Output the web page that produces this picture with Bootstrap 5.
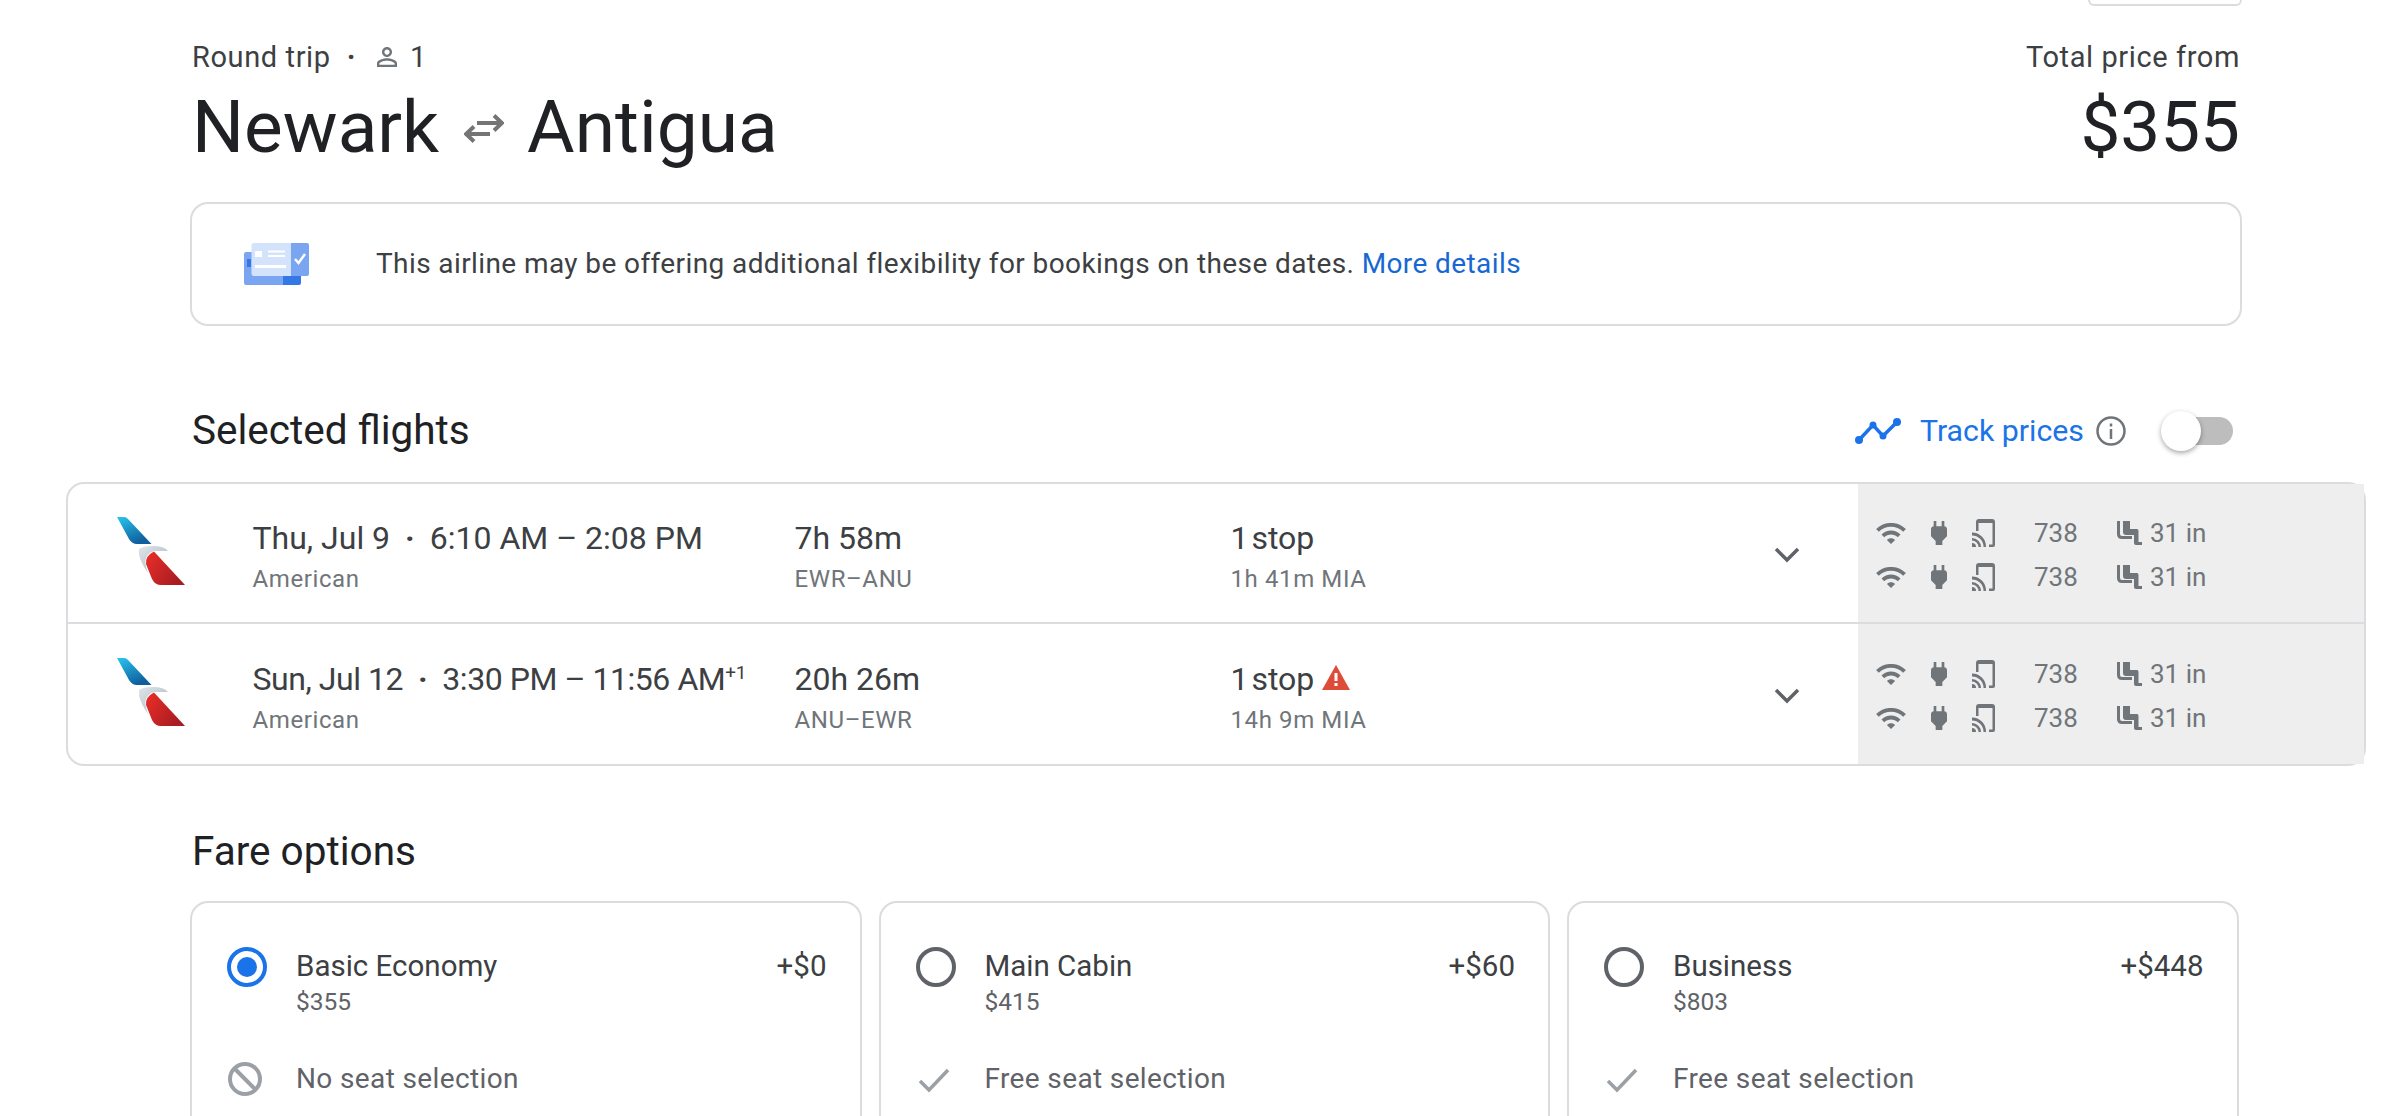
<!DOCTYPE html>
<html lang="en">
<head>
  <meta charset="UTF-8" />
  <title>Newark to Antigua – Flights</title>
  <link href="https://cdn.jsdelivr.net/npm/bootstrap@5.3.0/dist/css/bootstrap.min.css" rel="stylesheet" />
  <style>
    html, body { height: 1116px; overflow: hidden; }
    body { background: #fff; font-family: Roboto, "Liberation Sans", sans-serif; color: #202124; }

    /* header */
    .chip-stub { width: 154px; height: 6px; margin-left: 2088px; border: 2px solid #dadce0; border-top: 0; border-radius: 0 0 8px 8px; }
    .page-wrap { width: 2052px; margin-left: 190px; }
    .head-row { padding: 0 2px; }
    .trip-meta { height: 36px; margin-top: 33px; font-size: 29px; line-height: 36px; color: #3c4043; letter-spacing: .6px; }
    .trip-meta .dot { margin: 0 16px; font-weight: 700; }
    .trip-title { font-size: 73px; line-height: 88px; font-weight: 400; margin: 8px 0 0; color: #202124; }
    .trip-price { font-size: 71px; line-height: 88px; margin-top: 8px; color: #202124; }
    .swap-ico { width: 40px; height: 30px; margin: 4px 23px 0 25px; }

    /* flexibility note */
    .note-box { height: 124px; margin-top: 31px; border: 2px solid #dadce0; border-radius: 18px; font-size: 28px; letter-spacing: .4px; color: #3c4043; }
    .note-ico { margin-left: 52px; margin-right: 67px; }
    .note-box a { color: #1967d2; text-decoration: none; }

    /* section heads */
    .sect-head { font-size: 40.5px; line-height: 48px; margin: 0; padding-left: 2px; font-weight: 400; color: #202124; }
    .sel-head { height: 48px; margin-top: 80px; }
    .track-box { margin-top: 2px; }
    .track-ico { margin-right: 19px; }
    .info-ico { margin-left: 12px; }
    .track-link { color: #1a73e8; font-size: 30.3px; }
    .toggle-track { display: block; width: 68px; height: 28px; margin-left: 39px; margin-right: 9px; background: #bdbdbd; border-radius: 14px; position: relative; }
    .toggle-track::before { content: ""; position: absolute; left: -4px; top: -6px; width: 40px; height: 40px; border-radius: 50%; background: #fff; box-shadow: 0 2px 5px rgba(0,0,0,.35); }

    /* flights */
    .flights-box { width: 2300px; margin: 28px 0 0 66px; border: 2px solid #dadce0; border-radius: 18px; }
    .flight-row { height: 138px; }
    .flight-row + .flight-row { height: 142px; border-top: 2px solid #dadce0; }
    .logo-col { width: 184.5px; padding-left: 49px; margin-bottom: 5px; }
    .when-col { width: 542px; margin-top: 6px; }
    .dur-col { width: 436px; margin-top: 6px; }
    .stop-col { width: 543.5px; margin-top: 6px; }
    .chev-col { width: 84px; margin-top: 2px; }
    .main-txt { font-size: 32px; line-height: 40px; color: #3c4043; }
    .main-txt sup { font-size: 19px; top: -.6em; line-height: 0; }
    .main-txt .dot { margin: 0 15px; font-weight: 700; }
    .tight-txt { letter-spacing: -.45px; }
    .stop-txt { word-spacing: -5px; }
    .sub-txt { font-size: 24px; line-height: 30px; margin-top: 6px; color: #70757a; letter-spacing: .6px; }
    .amen-panel { flex: 1; align-self: stretch; background: #eee; padding: 4px 0 0 18px; font-size: 26px; color: #70757a; }
    .amen-line { height: 44px; }
    .amen-line .num { width: 44px; margin-left: 39px; margin-right: 39px; }
    .amen-line svg { fill: #70757a; }

    /* fares */
    .fare-head { height: 48px; margin-top: 61px; }
    .fare-list { margin-top: 26px; gap: 17px; }
    .fare-box { width: 671.5px; height: 300px; border: 2px solid #dadce0; border-radius: 18px; padding: 44px 33px 0 35px; }
    .fare-title { font-size: 29.5px; line-height: 38px; color: #3c4043; }
    .fare-sub { font-size: 24.5px; line-height: 30px; color: #5f6368; margin-top: 2px; }
    .fare-feat { font-size: 28px; letter-spacing: .37px; line-height: 38px; color: #5f6368; margin-top: 43px; }
    .fare-ico { width: 40px; margin-right: 29px; }
  </style>
</head>
<body>

<!-- hidden icon defs -->
<svg width="0" height="0" class="d-block">
  <defs>
    <linearGradient id="aaBlue" x1="0" y1="0" x2="0.5" y2="1">
      <stop offset="0" stop-color="#29c5f0"/><stop offset="1" stop-color="#0f5f9e"/>
    </linearGradient>
    <linearGradient id="aaRed" x1="0" y1="0" x2="1" y2="0.6">
      <stop offset="0" stop-color="#ec2f27"/><stop offset="1" stop-color="#a81c22"/>
    </linearGradient>
    <linearGradient id="aaGrey" x1="0" y1="0" x2="1" y2="1">
      <stop offset="0" stop-color="#dfe5ea"/><stop offset="1" stop-color="#a9b6c0"/>
    </linearGradient>
    <symbol id="aa-logo" viewBox="0 0 68 68">
      <path d="M0 0H7Q9.500 0 11 2L34.500 27H20Q15 27 12 22Z" fill="url(#aaBlue)"/>
      <path d="M22 32Q26 29 36 29Q47 29 51 34H37Q30 36 28.500 43Q28 48 31 56Q24 46 22 38Z" fill="url(#aaGrey)"/>
      <path d="M37 34.500L68 68H44Q38 68 35 62L29 47Q28 39 37 34.500Z" fill="url(#aaRed)"/>
    </symbol>
    <symbol id="i-wifi" viewBox="1 4.500 22 15.500">
      <path d="M1 9l2 2c4.970-4.970 13.030-4.970 18 0l2-2C16.930 2.930 7.080 2.930 1 9zm8 8l3 3 3-3c-1.650-1.660-4.340-1.660-6 0zm-4-4l2 2c2.760-2.760 7.240-2.760 10 0l2-2C15.140 9.140 8.870 9.140 5 13z"/>
    </symbol>
    <symbol id="i-plug" viewBox="6 3 12 18">
      <path d="M16 7V3h-2v4h-4V3H8v4C7 7 6 8 6 9v5.500L9.500 18v3h5v-3l3.500-3.500V9c0-1-1-2-2-2z"/>
    </symbol>
    <symbol id="i-cast" viewBox="0 0 23 28">
      <path d="M4 12V3Q4 0 7 0H20Q23 0 23 3V26Q23 28 21 28H17V25.500H20.500V4H6.500V12Z"/>
      <path d="M0 13.500A14 14 0 0 1 14 28H11.500A11.500 11.500 0 0 0 0 16.500Z"/>
      <path d="M0 19A9 9 0 0 1 9 28H6.500A6.500 6.500 0 0 0 0 21.500Z"/>
      <path d="M0 24A4 4 0 0 1 4 28H0Z"/>
    </symbol>
    <symbol id="i-seat" viewBox="0 0 25 24">
      <path d="M0 0H3V13Q3 15 5 15H15V18H5Q0 18 0 13Z"/>
      <path d="M6 0H13V8H20Q21.500 8 21.500 10V21H25V24H19Q17 24 17 22V14H9Q6 14 6 11Z"/>
    </symbol>
  </defs>
</svg>

<div class="chip-stub"></div>

<div class="page-wrap">
  <!-- title -->
  <div class="head-row d-flex justify-content-between">
    <div>
      <div class="trip-meta d-flex align-items-center">
        Round trip<span class="dot">·</span>
        <svg width="30" height="30" viewBox="0 0 24 24" fill="#70757a" class="me-2"><path d="M12 5.900c1.160 0 2.100.940 2.100 2.100s-.940 2.100-2.100 2.100S9.900 9.160 9.900 8s.940-2.100 2.100-2.100m0 9c2.970 0 6.100 1.460 6.100 2.100v1.100H5.900V17c0-.640 3.130-2.100 6.100-2.100M12 4C9.790 4 8 5.790 8 8s1.790 4 4 4 4-1.790 4-4-1.790-4-4-4zm0 9c-2.670 0-8 1.340-8 4v3h16v-3c0-2.660-5.330-4-8-4z"/></svg>
        1
      </div>
      <h1 class="trip-title d-flex align-items-center">
        Newark
        <svg class="swap-ico" viewBox="0 0 40 30" fill="none" stroke="#757575" stroke-width="4"><path d="M13 9H37M30 1.500L38 9L30 16.500M26 20H3M10 12.500L2 20L10 27.500"/></svg>
        Antigua
      </h1>
    </div>
    <div class="text-end">
      <div class="trip-meta">Total price from</div>
      <div class="trip-price">$355</div>
    </div>
  </div>

  <!-- flexibility note -->
  <div class="note-box d-flex align-items-center">
    <svg class="note-ico" width="65" height="42" viewBox="0 0 65 42">
      <path d="M0 11Q0 9 2 9H55Q57 9 57 11V33H39V42H2Q0 42 0 40Z" fill="#7aa5f0"/>
      <path d="M39 33H57V40Q57 42 55 42H39Z" fill="#3578e5"/>
      <rect x="3" y="16" width="4" height="8" fill="#3578e5"/>
      <path d="M46 0H63Q65 0 65 2V31Q65 33 63 33H46Z" fill="#7aa5f0"/>
      <path d="M10 0H47V33H10Q7.500 33 7.500 31V2Q7.500 0 10 0Z" fill="#d3e3fc"/>
      <rect x="11" y="8" width="7" height="6" fill="#fff"/>
      <rect x="24" y="7.500" width="17" height="2" fill="#fff"/>
      <rect x="24" y="12" width="17" height="2" fill="#fff"/>
      <rect x="11" y="22" width="31" height="3" fill="#fff"/>
      <path d="M51 16L54.500 20L61 11" fill="none" stroke="#fff" stroke-width="2.500"/>
    </svg>
    <span>This airline may be offering additional flexibility for bookings on these dates. <a href="#">More details</a></span>
  </div>

  <!-- selected flights head -->
  <div class="sel-head d-flex align-items-center justify-content-between">
    <h2 class="sect-head">Selected flights</h2>
    <div class="track-box d-flex align-items-center">
      <svg width="46" height="26" viewBox="0 0 46 26" fill="#1a73e8" class="track-ico">
        <path d="M4 22L18 7L28 18L42 4" fill="none" stroke="#1a73e8" stroke-width="3.500"/>
        <circle cx="4" cy="22" r="4"/><circle cx="18" cy="7" r="3.500"/><circle cx="28" cy="18" r="3.500"/><circle cx="42" cy="4" r="4"/>
      </svg>
      <span class="track-link">Track prices</span>
      <svg width="30" height="30" viewBox="0 0 30 30" fill="none" stroke="#70757a" stroke-width="2.500" class="info-ico">
        <circle cx="15" cy="15" r="13.500"/><path d="M15 13V23M15 7.500V10.500"/>
      </svg>
      <span class="toggle-track"></span>
    </div>
  </div>
</div>

<!-- flights -->
<div class="flights-box">
  <div class="flight-row d-flex align-items-center">
    <div class="logo-col"><svg width="68" height="68" class="d-block"><use href="#aa-logo"/></svg></div>
    <div class="when-col">
      <div class="main-txt">Thu, Jul 9<span class="dot">·</span>6:10 AM – 2:08 PM</div>
      <div class="sub-txt">American</div>
    </div>
    <div class="dur-col">
      <div class="main-txt">7h 58m</div>
      <div class="sub-txt">EWR–ANU</div>
    </div>
    <div class="stop-col">
      <div class="main-txt stop-txt">1 stop</div>
      <div class="sub-txt">1h 41m MIA</div>
    </div>
    <div class="chev-col"><svg width="26" height="20" viewBox="0 0 26 20" fill="none" stroke="#5f6368" stroke-width="3.500"><path d="M2 4L13 15L24 4"/></svg></div>
    <div class="amen-panel d-flex flex-column justify-content-center">
      <div class="amen-line d-flex align-items-center">
        <svg width="30" height="21"><use href="#i-wifi"/></svg>
        <svg width="18" height="24" class="ms-4"><use href="#i-plug"/></svg>
        <svg width="23" height="28" class="ms-4"><use href="#i-cast"/></svg>
        <span class="num">738</span>
        <svg width="25" height="24" class="me-2"><use href="#i-seat"/></svg>31 in
      </div>
      <div class="amen-line d-flex align-items-center">
        <svg width="30" height="21"><use href="#i-wifi"/></svg>
        <svg width="18" height="24" class="ms-4"><use href="#i-plug"/></svg>
        <svg width="23" height="28" class="ms-4"><use href="#i-cast"/></svg>
        <span class="num">738</span>
        <svg width="25" height="24" class="me-2"><use href="#i-seat"/></svg>31 in
      </div>
    </div>
  </div>
  <div class="flight-row d-flex align-items-center">
    <div class="logo-col"><svg width="68" height="68" class="d-block"><use href="#aa-logo"/></svg></div>
    <div class="when-col">
      <div class="main-txt tight-txt">Sun, Jul 12<span class="dot">·</span>3:30 PM – 11:56 AM<sup>+1</sup></div>
      <div class="sub-txt">American</div>
    </div>
    <div class="dur-col">
      <div class="main-txt">20h 26m</div>
      <div class="sub-txt">ANU–EWR</div>
    </div>
    <div class="stop-col">
      <div class="main-txt stop-txt d-flex align-items-center">1 stop
        <svg width="28" height="25" viewBox="0 0 28 25" class="ms-2 mb-1"><path d="M14 0L28 25H0Z" fill="#dd4b39"/><rect x="12.500" y="8" width="3" height="8" fill="#fff"/><rect x="12.500" y="18" width="3" height="3" fill="#fff"/></svg>
      </div>
      <div class="sub-txt">14h 9m MIA</div>
    </div>
    <div class="chev-col"><svg width="26" height="20" viewBox="0 0 26 20" fill="none" stroke="#5f6368" stroke-width="3.500"><path d="M2 4L13 15L24 4"/></svg></div>
    <div class="amen-panel d-flex flex-column justify-content-center">
      <div class="amen-line d-flex align-items-center">
        <svg width="30" height="21"><use href="#i-wifi"/></svg>
        <svg width="18" height="24" class="ms-4"><use href="#i-plug"/></svg>
        <svg width="23" height="28" class="ms-4"><use href="#i-cast"/></svg>
        <span class="num">738</span>
        <svg width="25" height="24" class="me-2"><use href="#i-seat"/></svg>31 in
      </div>
      <div class="amen-line d-flex align-items-center">
        <svg width="30" height="21"><use href="#i-wifi"/></svg>
        <svg width="18" height="24" class="ms-4"><use href="#i-plug"/></svg>
        <svg width="23" height="28" class="ms-4"><use href="#i-cast"/></svg>
        <span class="num">738</span>
        <svg width="25" height="24" class="me-2"><use href="#i-seat"/></svg>31 in
      </div>
    </div>
  </div>
</div>

<!-- fares -->
<div class="page-wrap">
  <div class="fare-head d-flex align-items-center">
    <h2 class="sect-head">Fare options</h2>
  </div>
  <div class="fare-list d-flex">
    <div class="fare-box">
      <div class="d-flex">
        <div class="fare-ico"><svg width="40" height="40" viewBox="0 0 40 40" fill="none"><circle cx="20" cy="20" r="18" stroke="#1a73e8" stroke-width="4"/><circle cx="20" cy="20" r="10" fill="#1a73e8"/></svg></div>
        <div class="flex-grow-1">
          <div class="d-flex justify-content-between fare-title"><span>Basic Economy</span><span>+$0</span></div>
          <div class="fare-sub">$355</div>
        </div>
      </div>
      <div class="d-flex align-items-center fare-feat">
        <div class="fare-ico"><svg width="36" height="36" viewBox="0 0 36 36" fill="none" stroke="#9aa0a6" stroke-width="4" class="d-block"><circle cx="18" cy="18" r="15"/><path d="M7.500 7.500L28.500 28.500"/></svg></div>
        <span>No seat selection</span>
      </div>
    </div>
    <div class="fare-box">
      <div class="d-flex">
        <div class="fare-ico"><svg width="40" height="40" viewBox="0 0 40 40" fill="none"><circle cx="20" cy="20" r="18" stroke="#5f6368" stroke-width="4"/></svg></div>
        <div class="flex-grow-1">
          <div class="d-flex justify-content-between fare-title"><span>Main Cabin</span><span>+$60</span></div>
          <div class="fare-sub">$415</div>
        </div>
      </div>
      <div class="d-flex align-items-center fare-feat">
        <div class="fare-ico"><svg width="36" height="36" viewBox="0 0 36 36" fill="none" stroke="#9aa0a6" stroke-width="3.500" class="d-block"><path d="M4 20L13 29L32 9"/></svg></div>
        <span>Free seat selection</span>
      </div>
    </div>
    <div class="fare-box">
      <div class="d-flex">
        <div class="fare-ico"><svg width="40" height="40" viewBox="0 0 40 40" fill="none"><circle cx="20" cy="20" r="18" stroke="#5f6368" stroke-width="4"/></svg></div>
        <div class="flex-grow-1">
          <div class="d-flex justify-content-between fare-title"><span>Business</span><span>+$448</span></div>
          <div class="fare-sub">$803</div>
        </div>
      </div>
      <div class="d-flex align-items-center fare-feat">
        <div class="fare-ico"><svg width="36" height="36" viewBox="0 0 36 36" fill="none" stroke="#9aa0a6" stroke-width="3.500" class="d-block"><path d="M4 20L13 29L32 9"/></svg></div>
        <span>Free seat selection</span>
      </div>
    </div>
  </div>
</div>

<script src="https://cdn.jsdelivr.net/npm/bootstrap@5.3.0/dist/js/bootstrap.bundle.min.js"></script>
</body>
</html>
